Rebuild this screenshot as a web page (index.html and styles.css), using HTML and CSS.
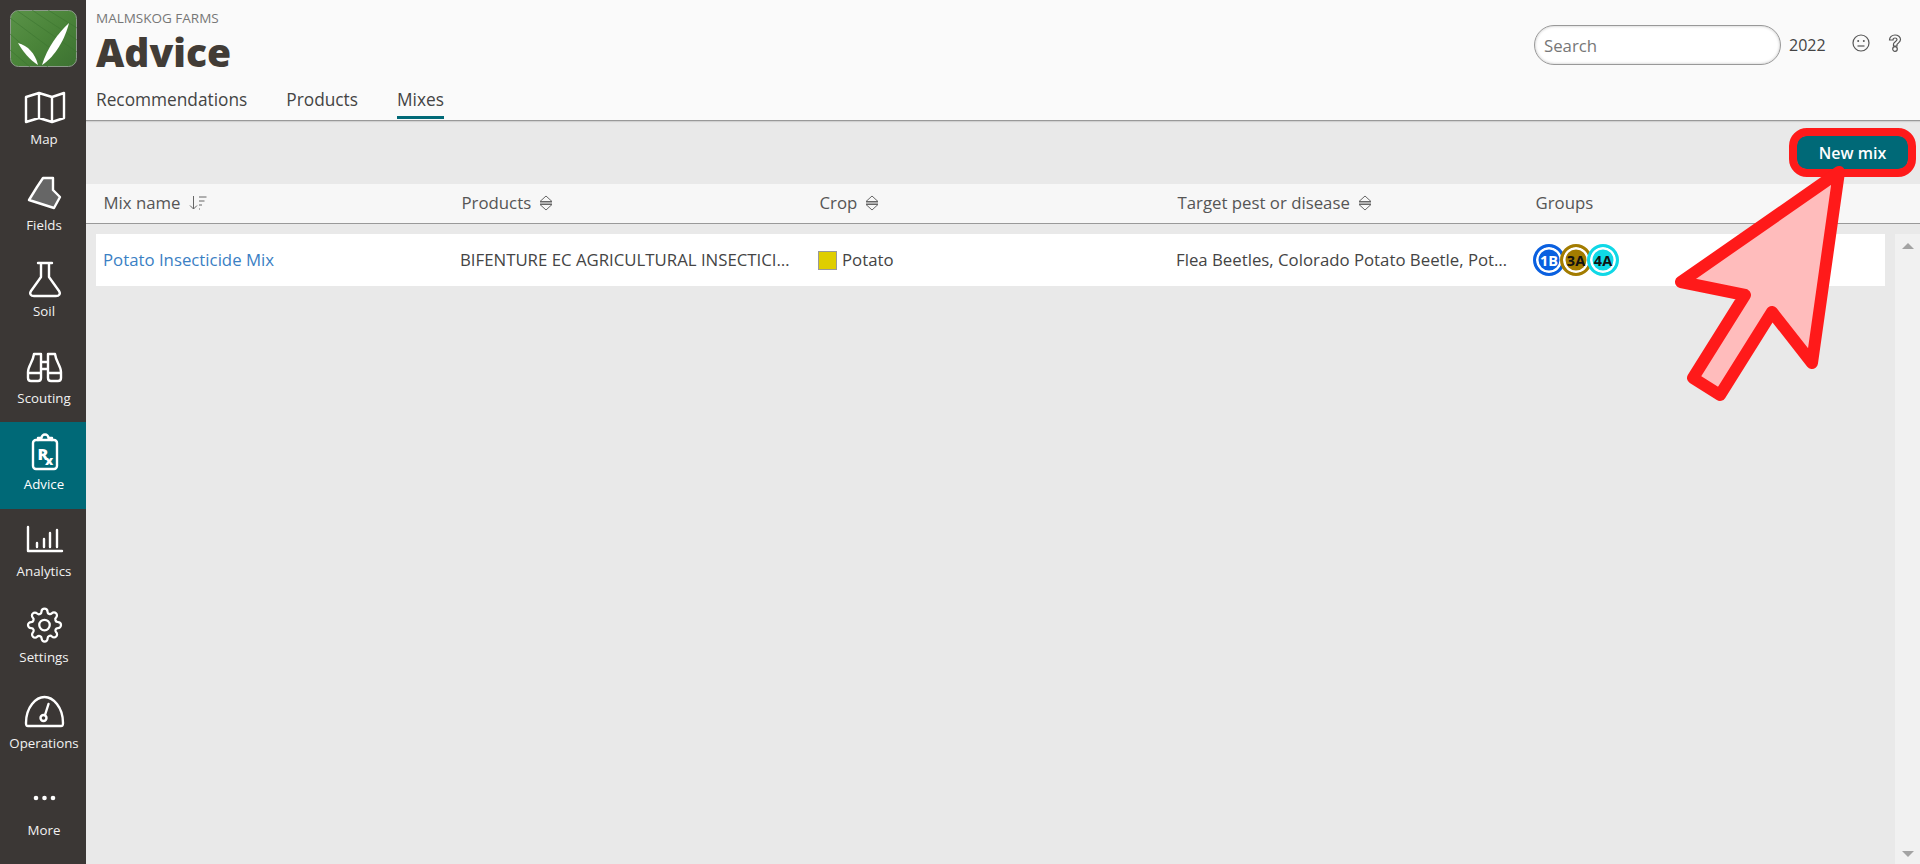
FILE: index.html
```html
<!DOCTYPE html>
<html lang="en">
<head>
<meta charset="utf-8">
<title>Advice</title>
<link rel="stylesheet" href="styles.css">
</head>
<body>
<div class="app">
  <nav class="sidebar">
    <div class="logo-wrap">
      <svg class="logo" viewBox="0 0 67 57">
        <defs>
          <linearGradient id="lg" x1="0" y1="0" x2="1" y2="1"><stop offset="0" stop-color="#5a9248"/><stop offset=".5" stop-color="#4a8439"/><stop offset="1" stop-color="#3d7232"/></linearGradient>
          <clipPath id="lc"><rect x="0" y="0" width="67" height="57" rx="8"/></clipPath>
        </defs>
        <rect x=".5" y=".5" width="66" height="56" rx="8" fill="url(#lg)" stroke="#8d9a8b"/>
        <g clip-path="url(#lc)" class="logo-lines">
          <path d="M0 8 40 38M6 0 67 42M22 0 67 30M38 0 67 18M0 24 38 57M0 40 20 57"/>
        </g>
        <path d="M8 33C18 36 25 43 28 55 20 50 13 42 8 33Z" fill="#fff"/>
        <path d="M59 13C48 23 37 38 32 55 42 49 54 33 59 13Z" fill="#fff"/>
      </svg>
    </div>
    <a class="nav-item">
      <svg class="nav-icon" viewBox="0 0 86 50"><path d="M26 20 39 16 52 20 64 16V41L52 45 39 41 26 45ZM39 16V41M52 20V45"/></svg>
      <span class="nav-label">Map</span>
    </a>
    <a class="nav-item">
      <svg class="nav-icon" viewBox="0 0 86 50"><path class="fill-grey" d="M43 15H53V27L60 34 54 45 29 37 37 24Z"/></svg>
      <span class="nav-label">Fields</span>
    </a>
    <a class="nav-item">
      <svg class="nav-icon" viewBox="0 0 86 50"><path d="M38 14H52M41 14V28L31 42C29 45 31 47 34 47H56C59 47 61 45 59 42L49 28V14"/></svg>
      <span class="nav-label">Soil</span>
    </a>
    <a class="nav-item">
      <svg class="nav-icon" viewBox="0 0 86 50"><path d="M34 18H41V42C41 44 40 45 38 45H31C29 45 28 44 28 42V36C28 30 33 26 34 18ZM55 18H48V42C48 44 49 45 51 45H58C60 45 61 44 61 42V36C61 30 56 26 55 18ZM41 26H48M41 33H48M28 37H41M48 37H61"/></svg>
      <span class="nav-label">Scouting</span>
    </a>
    <a class="nav-item nav-item-active">
      <svg class="nav-icon" viewBox="0 0 86 50"><rect x="33" y="18" width="24" height="29" rx="3"/><path d="M38 18V16H41.500A3.500 3.500 0 0 1 48.500 16H52V18"/><text class="rx" x="37.500" y="37.500">R</text><text class="rx rx-x" x="45" y="43">x</text></svg>
      <span class="nav-label">Advice</span>
    </a>
    <a class="nav-item">
      <svg class="nav-icon" viewBox="0 0 86 50"><path d="M28 18V42H62M37 38V34M44 38V30M50 38V24M57 38V21"/></svg>
      <span class="nav-label">Analytics</span>
    </a>
    <a class="nav-item">
      <svg class="nav-icon gear" viewBox="0 0 86 50"><g transform="translate(26.500 12) scale(1.500)"><circle cx="12" cy="12" r="3.500"/><path d="M19.400 15a1.650 1.650 0 0 0 .33 1.820l.06.06a2 2 0 0 1 0 2.830 2 2 0 0 1-2.830 0l-.06-.06a1.650 1.650 0 0 0-1.820-.33 1.650 1.650 0 0 0-1 1.510V21a2 2 0 0 1-2 2 2 2 0 0 1-2-2v-.09A1.650 1.650 0 0 0 9 19.400a1.650 1.650 0 0 0-1.820.33l-.06.06a2 2 0 0 1-2.830 0 2 2 0 0 1 0-2.830l.06-.06a1.650 1.650 0 0 0 .33-1.820 1.650 1.650 0 0 0-1.510-1H3a2 2 0 0 1-2-2 2 2 0 0 1 2-2h.09A1.650 1.650 0 0 0 4.600 9a1.650 1.650 0 0 0-.33-1.820l-.06-.06a2 2 0 0 1 0-2.830 2 2 0 0 1 2.830 0l.06.06a1.650 1.650 0 0 0 1.820.33H9a1.650 1.650 0 0 0 1-1.510V3a2 2 0 0 1 2-2 2 2 0 0 1 2 2v.09a1.650 1.650 0 0 0 1 1.510 1.650 1.650 0 0 0 1.820-.33l.06-.06a2 2 0 0 1 2.830 0 2 2 0 0 1 0 2.830l-.06.06a1.650 1.650 0 0 0-.33 1.820V9a1.650 1.650 0 0 0 1.510 1H21a2 2 0 0 1 2 2 2 2 0 0 1-2 2h-.09a1.650 1.650 0 0 0-1.510 1z"/></g></svg>
      <span class="nav-label">Settings</span>
    </a>
    <a class="nav-item">
      <svg class="nav-icon" viewBox="0 0 86 50"><path d="M28 45C26 45 26 44 26 42 26 26 36 16 44.500 16 53 16 63 26 63 42 63 44 63 45 61 45Z"/><circle cx="43.500" cy="37" r="3"/><path d="M45 34 48.500 23"/></svg>
      <span class="nav-label">Operations</span>
    </a>
    <a class="nav-item">
      <svg class="nav-icon dots" viewBox="0 0 86 50"><circle cx="36" cy="30" r="2.300"/><circle cx="44.500" cy="30" r="2.300"/><circle cx="53" cy="30" r="2.300"/></svg>
      <span class="nav-label">More</span>
    </a>
  </nav>

  <main class="main">
    <header class="header">
      <div class="header-left">
        <div class="org">MALMSKOG FARMS</div>
        <h1 class="title">Advice</h1>
        <div class="tabs">
          <a class="tab">Recommendations</a>
          <a class="tab">Products</a>
          <a class="tab tab-active">Mixes</a>
        </div>
      </div>
      <div class="header-right">
        <input class="search" placeholder="Search">
        <span class="year">2022</span>
        <svg class="hicon smile" viewBox="0 0 18 18"><circle cx="9" cy="9" r="8"/><circle class="dot" cx="6.200" cy="7" r="1"/><circle class="dot" cx="11.800" cy="7" r="1"/><path d="M5.500 12H12.500"/></svg>
        <svg class="hicon help" viewBox="0 0 14 18"><path d="M1.500 6C1.500 3 4 1 7 1 10 1 12.500 3 12.500 5.500 12.500 8 10 9 9 10.500V12H5.500V10C5.500 8 9 7.500 9 5.500 9 4.500 8 4 7 4 6 4 5 4.500 5 6Z"/><circle cx="7" cy="15" r="2.300"/></svg>
      </div>
    </header>

    <div class="toolbar"><button class="btn">New mix</button></div>

    <div class="thead">
      <div class="th">Mix name
        <svg class="sort sort-name" viewBox="0 0 18 16"><path d="M4.500 1V14M1 10.500 4.500 14 8 10.500M10 2H17.500M10 6H15.500M10 10H13M10 14H11"/></svg>
      </div>
      <div class="th">Products
        <svg class="sort" viewBox="0 0 14 16"><path d="M7 1 13 6.500H1ZM1 8H13M1 9.500 7 15 13 9.500Z"/></svg>
      </div>
      <div class="th">Crop
        <svg class="sort" viewBox="0 0 14 16"><path d="M7 1 13 6.500H1ZM1 8H13M1 9.500 7 15 13 9.500Z"/></svg>
      </div>
      <div class="th">Target pest or disease
        <svg class="sort" viewBox="0 0 14 16"><path d="M7 1 13 6.500H1ZM1 8H13M1 9.500 7 15 13 9.500Z"/></svg>
      </div>
      <div class="th">Groups</div>
    </div>

    <div class="tbody">
      <div class="rows">
        <div class="row">
          <div class="cell cell-name"><a class="link">Potato Insecticide Mix</a></div>
          <div class="cell cell-text">BIFENTURE EC AGRICULTURAL INSECTICIDE, ASSAIL 70WP</div>
          <div class="cell cell-crop"><span class="swatch"></span>Potato</div>
          <div class="cell cell-text">Flea Beetles, Colorado Potato Beetle, Potato Aphid</div>
          <div class="cell cell-groups">
            <span class="badge badge-blue">1B</span>
            <span class="badge badge-gold">3A</span>
            <span class="badge badge-cyan">4A</span>
          </div>
        </div>
      </div>
      <div class="scrollbar">
        <span class="arrow arrow-up"></span>
        <span class="arrow arrow-down"></span>
      </div>
    </div>
  </main>
</div>

<svg class="annotation" viewBox="0 0 1920 864">
  <rect class="hl" x="1793" y="132" width="119" height="41" rx="14"/>
  <path class="pointer" d="M1839 172 1812 363 1772 312 1720 395 1693 378 1745 295 1681 282Z"/>
</svg>
</body>
</html>
```
FILE: styles.css
```css
* { box-sizing: border-box; }
html, body { margin: 0; height: 100%; }
body { font-family: "Open Sans", sans-serif; color: #444; overflow: hidden; background: #e9e9e9; }

.app { display: flex; height: 864px; }

.sidebar { width: 86px; flex: none; background: #3b3735; display: flex; flex-direction: column; }
.logo-wrap { height: 76.7px; padding: 10px 9px 0 10px; flex: none; }
.logo { display: block; width: 67px; height: 57px; }
.logo-lines { fill: none; stroke: #3c7430; stroke-width: 1; opacity: .6; }
.nav-item { height: 86.4px; flex: none; display: flex; flex-direction: column; align-items: center; color: #f2f2f2; }
.nav-item-active { background: #006977; color: #fff; }
.nav-icon { width: 86px; height: 50px; flex: none; fill: none; stroke: #fff; stroke-width: 2.4; stroke-linejoin: round; stroke-linecap: round; }
.fill-grey { fill: #666; }
.dots { fill: #fff; stroke: none; }
.rx { font: 800 16px "Open Sans", sans-serif; fill: #fff; stroke: none; }
.rx-x { font-size: 13px; }
.gear path, .gear circle { stroke-width: 1.500; }
.nav-label { font-size: 13.3px; line-height: 18px; margin-top: 3px; padding-left: 2px; white-space: nowrap; }

.main { flex: 1; min-width: 0; display: flex; flex-direction: column; }

.header { height: 121px; flex: none; background: #fafafa; border-bottom: 1px solid #999; box-shadow: 0 1px 1px rgba(0,0,0,.1); padding: 0 18px 0 10px; display: flex; justify-content: space-between; }
.org { font-size: 13.5px; line-height: 17px; color: #777; margin-top: 10px; }
.title { margin: 0; font-size: 39px; line-height: 50px; font-weight: 800; color: #423c36; }
.tabs { display: flex; gap: 39px; margin-top: 11px; }
.tab { font-size: 17.3px; line-height: 22px; font-weight: 500; color: #444; padding-top: 1px; height: 31px; border-bottom: 3px solid transparent; }
.tab-active { border-bottom-color: #006977; }

.header-right { display: flex; align-items: flex-start; padding-top: 25px; }
.search { width: 247px; height: 40px; border: 1px solid #999; border-radius: 20px; padding: 0 9px; font: 16.8px "Open Sans", sans-serif; color: #777; background: #fff; box-shadow: inset 0 0 3px rgba(0,0,0,.25); margin-right: 8px; outline: none; }
.search::placeholder { color: #777; opacity: 1; }
.year { font-size: 16px; line-height: 40px; color: #444; width: 63px; }
.hicon { fill: none; stroke: #555; stroke-width: 1.200; flex: none; }
.smile { width: 18px; height: 18px; margin-top: 9px; margin-right: 18px; }
.smile .dot { fill: #555; stroke: none; }
.help { width: 14px; height: 18px; margin-top: 9px; }

.toolbar { height: 63px; flex: none; display: flex; justify-content: flex-end; align-items: flex-start; padding: 15px 12px 0 0; }
.btn { width: 111px; height: 33px; border: 0; border-radius: 8px; background: #006977; color: #fff; font: 600 16px "Open Sans", sans-serif; padding: 0; }

.thead { height: 40px; flex: none; display: grid; grid-template-columns: repeat(5, 358px); padding-left: 17.5px; background: #f7f7f7; border-bottom: 1px solid #999; }
.th { font-size: 16.8px; line-height: 38px; height: 37px; color: #555; display: flex; align-items: center; gap: 8px; }
.sort { width: 14px; height: 16px; fill: none; stroke: #666; stroke-width: 1; flex: none; }
.sort-name { width: 18px; }

.tbody { flex: 1; min-height: 0; display: flex; padding: 10px 0 0 10px; }
.rows { flex: 1; min-width: 0; }
.row { width: 1789px; height: 52px; background: #fff; display: grid; grid-template-columns: 357px 358px 358px 357px 1fr; align-items: center; padding: 0 0 2px 7px; font-size: 16.8px; }
.cell { display: flex; align-items: center; min-width: 0; }
.cell-text { display: block; width: 333px; white-space: nowrap; overflow: hidden; text-overflow: ellipsis; color: #444; }
.link { color: #3a80c4; }
.swatch { width: 19px; height: 19px; background: #dfce00; border: 1px solid #999; margin: 2px 5px 0 0; }
.cell-groups { display: flex; margin-top: 2px; }
.badge { width: 32px; height: 32px; border-radius: 50%; border: 3px solid; box-shadow: inset 0 0 0 2.500px #fff; display: flex; align-items: center; justify-content: center; font-size: 14.500px; font-weight: 700; margin-right: -5px; color: #111; flex: none; }
.badge-blue { background: #0a60e0; border-color: #0a60e0; color: #fff; }
.badge-gold { background: #a37c00; border-color: #a37c00; }
.badge-cyan { background: #10d8e6; border-color: #10d8e6; }

.scrollbar { width: 25px; flex: none; background: #f1f1f1; display: flex; flex-direction: column; justify-content: space-between; align-items: center; padding: 9px 0 7px; }
.arrow { width: 0; height: 0; border-left: 6px solid transparent; border-right: 6px solid transparent; }
.arrow-up { border-bottom: 6px solid #a3a3a3; }
.arrow-down { border-top: 6px solid #a3a3a3; }

.annotation { position: absolute; left: 0; top: 0; width: 1920px; height: 864px; pointer-events: none; }
.hl { fill: none; stroke: #ff1a1a; stroke-width: 8; }
.pointer { fill: #ffbcbc; stroke: #ff1a1a; stroke-width: 12; stroke-linejoin: round; }
```
